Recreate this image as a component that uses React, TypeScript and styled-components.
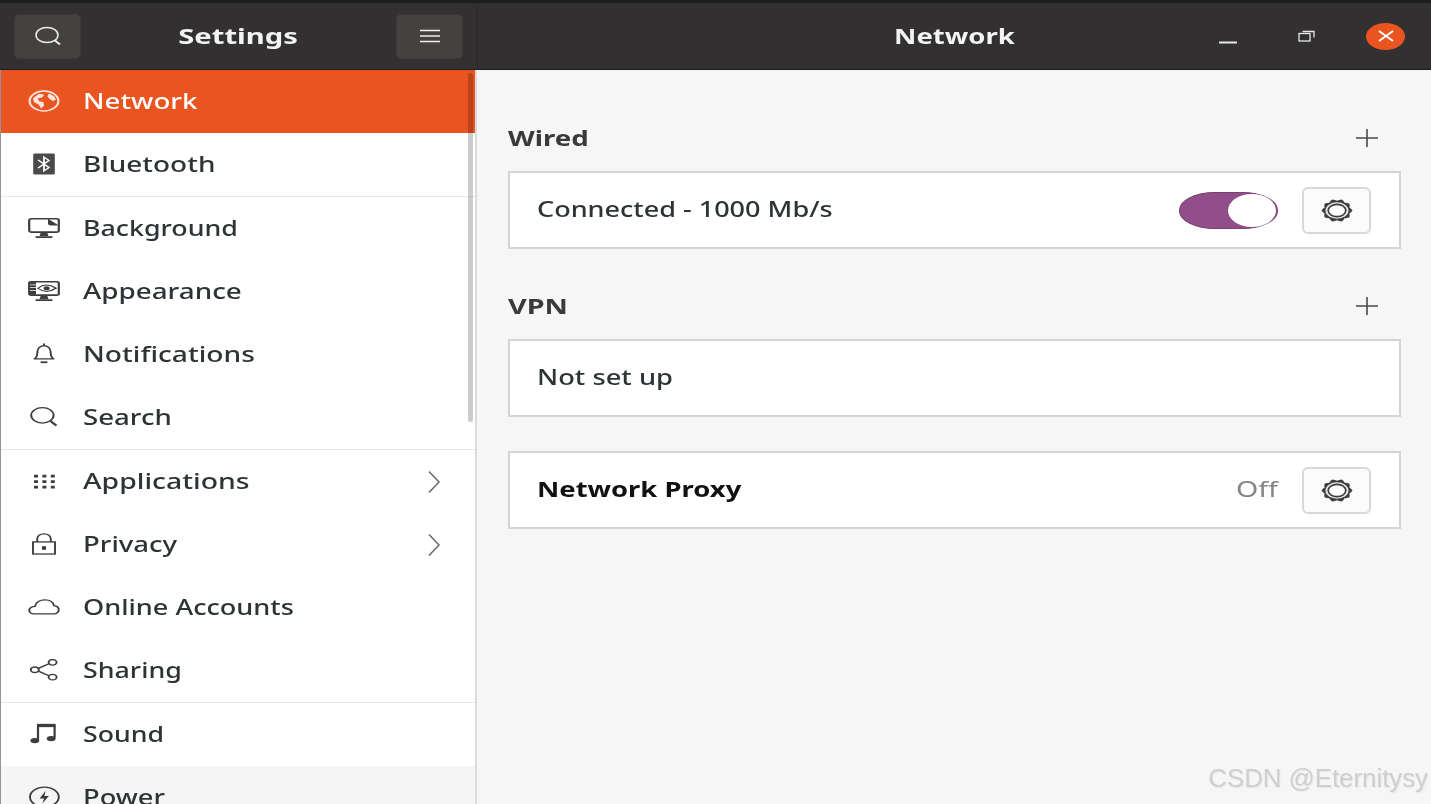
import React from 'react'
import styled, { createGlobalStyle } from 'styled-components'

const GlobalStyle = createGlobalStyle`
  html, body {
    margin: 0;
    padding: 0;
    background: #f6f6f6;
    overflow: hidden;
  }
`

const Window = styled.div`
  position: relative;
  width: 1431px;
  height: 804px;
  overflow: hidden;
  display: grid;
  grid-template-columns: 477px 1fr;
  grid-template-rows: 70px 1fr;
  font-family: 'Noto Sans', sans-serif;
  filter: blur(0.45px);
`

const HeaderLeft = styled.header`
  display: flex;
  align-items: center;
  justify-content: space-between;
  padding: 0 14px;
  background: #323030;
  border-top: 3px solid #1e1d1d;
  border-bottom: 1px solid #1f1e1e;
  box-sizing: border-box;
`

const HeaderRight = styled(HeaderLeft)`
  position: relative;
  padding: 0 26px 0 0;
  justify-content: flex-end;
  border-left: 1px solid #292727;
`

const HeaderButton = styled.button`
  width: 67px;
  height: 45px;
  padding: 0;
  display: grid;
  place-items: center;
  background: #444240;
  border: 1px solid #3c3a39;
  border-radius: 5px;
  color: #eeeeec;
`

// the source picture is stretched sideways, so text gets a horizontal scale
const Title = styled.span<{ $scale: number }>`
  display: inline-block;
  font-size: 21px;
  font-weight: 700;
  color: #f3f3f3;
  transform: scaleX(${p => p.$scale});
  white-space: nowrap;
`

const WindowTitle = styled(Title)`
  position: absolute;
  left: 0;
  right: 0;
  text-align: center;
`

const WindowControls = styled.div`
  display: flex;
  align-items: center;
  gap: 40px;
`

const ControlIcon = styled.span`
  width: 39px;
  height: 27px;
  display: grid;
  place-items: center;
  color: #e8e8e8;
`

const CloseIcon = styled(ControlIcon)`
  background: #e95420;
  border-radius: 50%;
  color: #fff;
`

const MinimizeSvg = styled.svg`
  margin-top: 12px;
`

const Sidebar = styled.nav`
  position: relative;
  background: #fff;
  border-left: 1px solid #9a8f9a;
  border-right: 2px solid #dcdcdc;
  box-sizing: border-box;
  overflow: hidden;
`

const Row = styled.div<{ $active?: boolean; $hover?: boolean }>`
  height: 63px;
  display: flex;
  align-items: center;
  padding: 0 34px 0 27px;
  gap: 23px;
  color: ${p => (p.$active ? '#fff' : '#3d3d3d')};
  background: ${p => (p.$active ? '#e95420' : p.$hover ? '#f5f5f5' : '#fff')};
`

const Divider = styled.div`
  height: 1px;
  background: #e8e8e8;
`

const GlyphSvg = styled.svg`
  flex: none;
  margin-top: -2px;
`

const Label = styled.span<{ $scale: number; $active?: boolean }>`
  flex: 1;
  margin-top: -2px;
  font-size: 21px;
  font-weight: 500;
  color: ${p => (p.$active ? '#fff' : '#2e3436')};
  transform: scaleX(${p => p.$scale});
  transform-origin: left center;
  white-space: nowrap;
`

const Scrollbar = styled.div`
  position: absolute;
  top: 3px;
  right: 2px;
  width: 5px;
  height: 349px;
  border-radius: 3px;
  background: rgba(0, 0, 0, 0.2);
`

const Content = styled.main`
  background: #f6f6f6;
  padding: 50px 30px 0 31px;
  display: flex;
  flex-direction: column;
`

const SectionHead = styled.div`
  height: 36px;
  display: flex;
  align-items: center;
  justify-content: space-between;
  padding-right: 23px;
  margin-bottom: 15px;
  color: #3d3d3d;
`

const SectionTitle = styled.h2<{ $scale: number }>`
  margin: 0;
  font-size: 21px;
  font-weight: 700;
  color: #3a3a3a;
  transform: scaleX(${p => p.$scale});
  transform-origin: left center;
`

const Card = styled.section<{ $gap: number }>`
  height: 78px;
  box-sizing: border-box;
  display: flex;
  align-items: center;
  padding: 0 28px 0 27px;
  gap: 24px;
  background: #fff;
  border: 2px solid #d4d4d4;
  margin-bottom: ${p => p.$gap}px;
`

const CardLabel = styled.span<{ $scale: number; $bold?: boolean }>`
  flex: 1;
  margin-top: -2px;
  font-size: 21px;
  font-weight: ${p => (p.$bold ? 700 : 500)};
  color: ${p => (p.$bold ? '#111' : '#2e3436')};
  transform: scaleX(${p => p.$scale});
  transform-origin: left center;
  white-space: nowrap;
`

const Status = styled.span`
  margin-top: -2px;
  font-size: 21px;
  color: #858585;
  transform: scaleX(1.36);
  transform-origin: right center;
`

const Toggle = styled.div`
  width: 99px;
  height: 37px;
  box-sizing: border-box;
  display: flex;
  justify-content: flex-end;
  padding: 1px;
  background: #924d8b;
  border: 1px solid #77406f;
  border-radius: 36px / 18px;
`

const Knob = styled.span`
  width: 48px;
  height: 33px;
  background: #fff;
  border-radius: 50%;
`

const GearButton = styled.button`
  width: 69px;
  height: 47px;
  padding: 0;
  display: grid;
  place-items: center;
  background: #fbfbfb;
  border: 2px solid #d8d8d8;
  border-radius: 6px;
  color: #3d3d3d;
`

const Watermark = styled.div`
  position: absolute;
  right: 3px;
  bottom: 11px;
  font-family: 'Liberation Sans', sans-serif;
  font-size: 25.8px;
  line-height: 30px;
  color: #cfcfcf;
  text-shadow: 1px 1px 1px #e6e6e6;
`

// 16 units = 32x22 on screen, same sideways stretch as the text
const Glyph = ({ children }: { children: React.ReactNode }) => (
  <GlyphSvg width={32} height={22} viewBox="0 0 16 16" preserveAspectRatio="none" fill="none" stroke="currentColor" strokeWidth="0.95">
    {children}
  </GlyphSvg>
)

const stand = <path d="M6.3 11.600h3.400l.5 2.200H5.800ZM3.800 14h8.400v1.200H3.800Z" fill="currentColor" stroke="none" />

const icons: Record<string, React.ReactNode> = {
  globe: (
    <g opacity="0.85">
      <circle cx="8" cy="8" r="7.200" strokeWidth="1.100" />
      <path d="M2.500 6 5.500 2.800 8.200 3.500 7 5.500 4.800 6.200 5.600 8.200 7.800 8.800 8 11.500 6.500 13.500 5.400 10.800 3 8.800Z" fill="currentColor" stroke="none" />
      <path d="M10.500 2.600 13 4.500 14 7 12.500 8 10.800 6.500 9.700 4.500Z" fill="currentColor" stroke="none" />
    </g>
  ),
  bluetooth: (
    <>
      <rect x="2.600" y="0.300" width="10.800" height="15.400" rx="1" fill="#4a4a4a" stroke="none" />
      <path d="M5 5l5.500 5.600L8 13V3l2.500 2.400L5 11" stroke="#fff" strokeWidth="0.900" />
    </>
  ),
  background: (
    <>
      <rect x="0.600" y="1.200" width="14.800" height="9.800" rx="1.200" strokeWidth="1.100" />
      <path d="M10 1.200 15.400 6.200H11.500Q10 6.200 10 4.800Z" fill="currentColor" stroke="none" />
      {stand}
    </>
  ),
  appearance: (
    <>
      <rect x="0.600" y="1.200" width="14.800" height="9.800" rx="1" strokeWidth="1.100" />
      <path d="M1 1.500H4V10.700H1Z" fill="currentColor" stroke="none" />
      <path d="M1 3.500h3M1 5.500h3M1 7.500h3" stroke="#fff" strokeWidth="0.600" />
      <path d="M5 6q4-4.600 9 0q-5 4.600-9 0Z" strokeWidth="0.750" />
      <circle cx="9.300" cy="6" r="1.500" fill="currentColor" stroke="none" />
      {stand}
    </>
  ),
  bell: (
    <>
      <path d="M3.200 11.500c1.200-1 1.500-2 1.500-5S6.300 2 8 2s3.300 1.500 3.300 4.500.3 4 1.500 5Z" strokeLinejoin="round" />
      <path d="M6.300 14h3.400" strokeWidth="1.300" />
      <path d="M8 .4v1.400" />
    </>
  ),
  search: (
    <>
      <circle cx="7.200" cy="6.800" r="5.600" />
      <path d="M11.300 11l2.900 3.200" strokeWidth="1.300" />
    </>
  ),
  apps: (
    <path
      d="M3 3.500h2v2H3ZM7.200 3.500h2v2h-2ZM11.400 3.500h2v2h-2ZM3 7.500h2v2H3ZM7.200 7.500h2v2h-2ZM11.400 7.500h2v2h-2ZM3 11.500h2v2H3ZM7.200 11.500h2v2h-2ZM11.400 11.500h2v2h-2Z"
      fill="currentColor"
      stroke="none"
    />
  ),
  lock: (
    <>
      <rect x="2.500" y="6.500" width="11" height="8.800" />
      <path d="M4.600 6.500V4.500C4.600 2 6.100 .6 8 .6s3.400 1.400 3.400 3.900v2" />
      <rect x="7" y="9.600" width="2" height="2.600" fill="currentColor" stroke="none" />
    </>
  ),
  cloud: <path d="M4 13H3C1.500 13 .6 11.700 .6 10.200S2 7.500 3.500 7.500C4 4.500 6 2.800 8.500 2.800s4.200 1.700 4.500 4.200c1.500.3 2.400 1.500 2.400 3s-1 3-2.500 3Z" />,
  share: (
    <>
      <circle cx="3.400" cy="7.800" r="2" />
      <circle cx="12.300" cy="2.400" r="2" />
      <circle cx="12.300" cy="13.200" r="2" />
      <path d="M5.200 6.800L10.500 3.400M5.200 8.800L10.500 12.200" />
    </>
  ),
  music: (
    <>
      <path d="M5 12.500V2.200H13.300V10.800" strokeWidth="1.100" />
      <path d="M4.500 1.800H13.800" strokeWidth="2.400" />
      <ellipse cx="3.400" cy="12.800" rx="2.200" ry="1.900" fill="currentColor" stroke="none" />
      <ellipse cx="11.600" cy="11.300" rx="2.200" ry="1.900" fill="currentColor" stroke="none" />
    </>
  ),
  power: (
    <>
      <circle cx="8.200" cy="8" r="7.200" />
      <path d="M8.800 3.500 5.800 9H8L7.200 12.800 10.400 7.200H8.200Z" fill="currentColor" stroke="none" />
    </>
  ),
}

const groups: { icon: string; label: string; scale: number; chevron?: boolean; active?: boolean; hover?: boolean }[][] = [
  [
    { icon: 'globe', label: 'Network', scale: 1.32, active: true },
    { icon: 'bluetooth', label: 'Bluetooth', scale: 1.33 },
  ],
  [
    { icon: 'background', label: 'Background', scale: 1.275 },
    { icon: 'appearance', label: 'Appearance', scale: 1.325 },
    { icon: 'bell', label: 'Notifications', scale: 1.34 },
    { icon: 'search', label: 'Search', scale: 1.315 },
  ],
  [
    { icon: 'apps', label: 'Applications', scale: 1.35, chevron: true },
    { icon: 'lock', label: 'Privacy', scale: 1.31, chevron: true },
    { icon: 'cloud', label: 'Online Accounts', scale: 1.29 },
    { icon: 'share', label: 'Sharing', scale: 1.275 },
  ],
  [
    { icon: 'music', label: 'Sound', scale: 1.27 },
    { icon: 'power', label: 'Power', scale: 1.3, hover: true },
  ],
]

const Chevron = () => (
  <svg width="14" height="24" viewBox="0 0 14 24" fill="none" stroke="#6a6a6a" strokeWidth="1.500">
    <path d="M2 1.500L12 12 2 22.500" />
  </svg>
)

const Plus = () => (
  <svg width="22" height="18" viewBox="0 0 22 18" fill="none" stroke="#4a4a4a" strokeWidth="1.600">
    <path d="M0 9h22M11 0v18" />
  </svg>
)

// ten lobes around an oval, in the 32x23 box of the gear icon
const gearOutline = Array.from({ length: 40 }, (_, i) => {
  const a = (i / 40) * Math.PI * 2
  const r = 0.92 + 0.08 * Math.cos(a * 10)
  return `${(16 + 15.5 * r * Math.cos(a)).toFixed(2)},${(11.5 + 11.5 * r * Math.sin(a)).toFixed(2)}`
}).join(' ')

const Gear = () => (
  <svg width="32" height="23" viewBox="0 0 32 23" fill="none" stroke="currentColor">
    <polygon points={gearOutline} fill="currentColor" stroke="none" />
    <ellipse cx="16" cy="11.500" rx="11.500" ry="8.200" fill="#e8e8e8" stroke="none" />
    <ellipse cx="16" cy="11.500" rx="8.800" ry="6.200" fill="#fff" strokeWidth="1.700" />
  </svg>
)

export default function App() {
  return (
    <Window>
      <GlobalStyle />
      <HeaderLeft>
        <HeaderButton aria-label="Search">
          <svg width="28" height="20" viewBox="0 0 28 20" fill="none" stroke="currentColor" strokeWidth="1.500">
            <ellipse cx="13" cy="9" rx="11" ry="7.500" />
            <path d="M21 14.500l5 4" strokeWidth="2" />
          </svg>
        </HeaderButton>
        <Title $scale={1.39}>Settings</Title>
        <HeaderButton aria-label="Menu">
          <svg width="22" height="14" viewBox="0 0 22 14" stroke="currentColor" strokeWidth="1.500">
            <path d="M1 1.500h20M1 7h20M1 12.500h20" />
          </svg>
        </HeaderButton>
      </HeaderLeft>
      <HeaderRight>
        <WindowTitle $scale={1.31}>Network</WindowTitle>
        <WindowControls>
          <ControlIcon>
            <MinimizeSvg width="18" height="3" viewBox="0 0 18 3" stroke="currentColor" strokeWidth="2">
              <path d="M0 1.500h18" />
            </MinimizeSvg>
          </ControlIcon>
          <ControlIcon>
            <svg width="17" height="12" viewBox="0 0 17 12" fill="none" stroke="currentColor" strokeWidth="1.300">
              <rect x="1" y="3.500" width="11" height="7.500" />
              <path d="M4.500 1.500H16v6" />
            </svg>
          </ControlIcon>
          <CloseIcon>
            <svg width="16" height="12" viewBox="0 0 16 12" stroke="currentColor" strokeWidth="2">
              <path d="M1 1l14 10M15 1L1 11" />
            </svg>
          </CloseIcon>
        </WindowControls>
      </HeaderRight>

      <Sidebar>
        {groups.map((group, i) => (
          <React.Fragment key={i}>
            {i > 0 && <Divider />}
            {group.map(item => (
              <Row key={item.label} $active={item.active} $hover={item.hover}>
                <Glyph>{icons[item.icon]}</Glyph>
                <Label $scale={item.scale} $active={item.active}>
                  {item.label}
                </Label>
                {item.chevron && <Chevron />}
              </Row>
            ))}
          </React.Fragment>
        ))}
        <Scrollbar />
      </Sidebar>

      <Content>
        <SectionHead>
          <SectionTitle $scale={1.316}>Wired</SectionTitle>
          <Plus />
        </SectionHead>
        <Card $gap={39}>
          <CardLabel $scale={1.287}>Connected - 1000 Mb/s</CardLabel>
          <Toggle>
            <Knob />
          </Toggle>
          <GearButton aria-label="Wired settings">
            <Gear />
          </GearButton>
        </Card>
        <SectionHead>
          <SectionTitle $scale={1.37}>VPN</SectionTitle>
          <Plus />
        </SectionHead>
        <Card $gap={34}>
          <CardLabel $scale={1.3}>Not set up</CardLabel>
        </Card>
        <Card $gap={0}>
          <CardLabel $scale={1.305} $bold>
            Network Proxy
          </CardLabel>
          <Status>Off</Status>
          <GearButton aria-label="Proxy settings">
            <Gear />
          </GearButton>
        </Card>
      </Content>
      <Watermark>CSDN @Eternitysy</Watermark>
    </Window>
  )
}
